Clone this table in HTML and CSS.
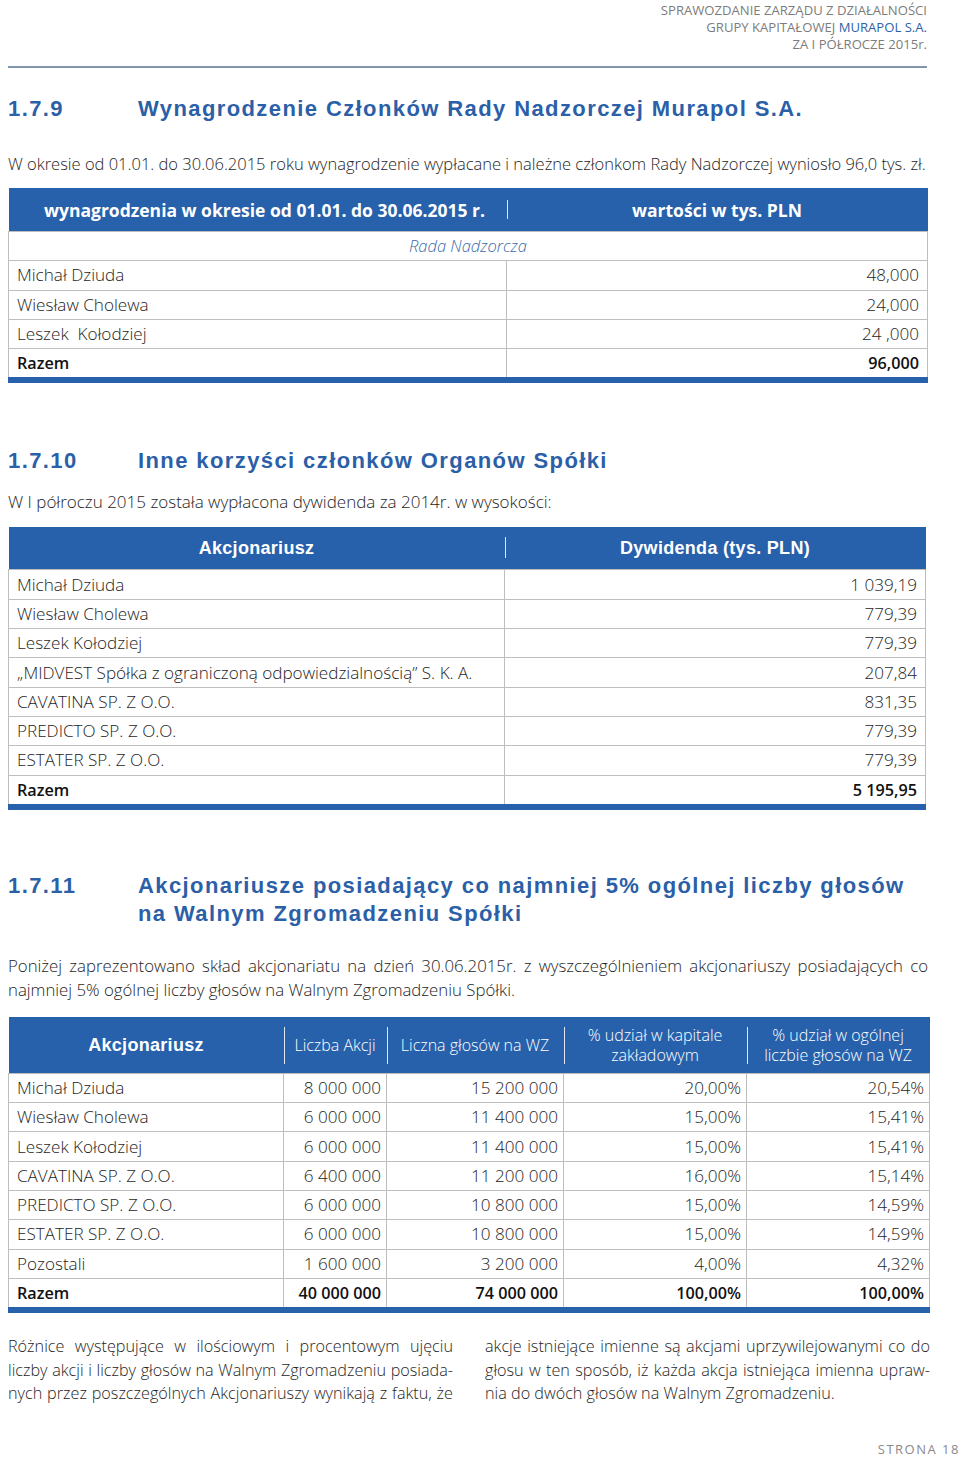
FILE: index.html
```html
<!DOCTYPE html>
<html lang="pl">
<head>
<meta charset="utf-8">
<title>Sprawozdanie</title>
<link rel="stylesheet" href="styles.css">
</head>
<body>
<div class="page">
  <header class="doc-head">
    <div>SPRAWOZDANIE ZARZĄDU Z DZIAŁALNOŚCI</div>
    <div>GRUPY KAPITAŁOWEJ <span class="brand">MURAPOL S.A.</span></div>
    <div>ZA I PÓŁROCZE 2015r.</div>
  </header>

  <h2 class="sec sec-1"><span class="num">1.7.9</span><span class="title">Wynagrodzenie Członków Rady Nadzorczej Murapol S.A.</span></h2>
  <p class="txt p1">W okresie od 01.01. do 30.06.2015 roku wynagrodzenie wypłacane i należne członkom Rady Nadzorczej wyniosło 96,0 tys. zł.</p>

  <table class="tbl t1">
    <thead>
      <tr class="hrow h1">
        <th class="c1 semi">wynagrodzenia w okresie od 01.01. do 30.06.2015 r.</th>
        <th class="c2 semi sep">wartości w tys. PLN</th>
      </tr>
    </thead>
    <tbody>
      <tr><td colspan="2" class="group">Rada Nadzorcza</td></tr>
      <tr><td>Michał Dziuda</td><td class="num">48,000</td></tr>
      <tr><td>Wiesław Cholewa</td><td class="num">24,000</td></tr>
      <tr><td>Leszek&nbsp; Kołodziej</td><td class="num">24 ,000</td></tr>
      <tr class="total"><td>Razem</td><td class="num">96,000</td></tr>
    </tbody>
  </table>

  <h2 class="sec sec-2"><span class="num">1.7.10</span><span class="title">Inne korzyści członków Organów Spółki</span></h2>
  <p class="txt p2">W I półroczu 2015 została wypłacona dywidenda za 2014r. w wysokości:</p>

  <table class="tbl t2">
    <thead>
      <tr class="hrow h2">
        <th class="c1 arial">Akcjonariusz</th>
        <th class="c2 arial sep">Dywidenda (tys. PLN)</th>
      </tr>
    </thead>
    <tbody>
      <tr><td>Michał Dziuda</td><td class="num">1 039,19</td></tr>
      <tr><td>Wiesław Cholewa</td><td class="num">779,39</td></tr>
      <tr><td>Leszek Kołodziej</td><td class="num">779,39</td></tr>
      <tr><td>„MIDVEST Spółka z ograniczoną odpowiedzialnością” S. K. A.</td><td class="num">207,84</td></tr>
      <tr><td>CAVATINA SP. Z O.O.</td><td class="num">831,35</td></tr>
      <tr><td>PREDICTO SP. Z O.O.</td><td class="num">779,39</td></tr>
      <tr><td>ESTATER SP. Z O.O.</td><td class="num">779,39</td></tr>
      <tr class="total"><td>Razem</td><td class="num">5 195,95</td></tr>
    </tbody>
  </table>

  <h2 class="sec sec-3"><span class="num">1.7.11</span><span class="title">Akcjonariusze posiadający co najmniej 5% ogólnej liczby głosów na Walnym Zgromadzeniu Spółki</span></h2>
  <p class="txt p3">Poniżej zaprezentowano skład akcjonariatu na dzień 30.06.2015r. z wyszczególnieniem akcjonariuszy posiadających co najmniej 5% ogólnej liczby głosów na Walnym Zgromadzeniu Spółki.</p>

  <table class="tbl t3">
    <thead>
      <tr class="hrow h3">
        <th class="k1 arial">Akcjonariusz</th>
        <th class="k2 light sep">Liczba Akcji</th>
        <th class="k3 light sep">Liczna głosów na WZ</th>
        <th class="k4 light sep">% udział w kapitale<br>zakładowym</th>
        <th class="k5 light sep">% udział w ogólnej<br>liczbie głosów na WZ</th>
      </tr>
    </thead>
    <tbody>
      <tr><td>Michał Dziuda</td><td class="num">8 000 000</td><td class="num">15 200 000</td><td class="num">20,00%</td><td class="num">20,54%</td></tr>
      <tr><td>Wiesław Cholewa</td><td class="num">6 000 000</td><td class="num">11 400 000</td><td class="num">15,00%</td><td class="num">15,41%</td></tr>
      <tr><td>Leszek Kołodziej</td><td class="num">6 000 000</td><td class="num">11 400 000</td><td class="num">15,00%</td><td class="num">15,41%</td></tr>
      <tr><td>CAVATINA SP. Z O.O.</td><td class="num">6 400 000</td><td class="num">11 200 000</td><td class="num">16,00%</td><td class="num">15,14%</td></tr>
      <tr><td>PREDICTO SP. Z O.O.</td><td class="num">6 000 000</td><td class="num">10 800 000</td><td class="num">15,00%</td><td class="num">14,59%</td></tr>
      <tr><td>ESTATER SP. Z O.O.</td><td class="num">6 000 000</td><td class="num">10 800 000</td><td class="num">15,00%</td><td class="num">14,59%</td></tr>
      <tr><td>Pozostali</td><td class="num">1 600 000</td><td class="num">3 200 000</td><td class="num">4,00%</td><td class="num">4,32%</td></tr>
      <tr class="total"><td>Razem</td><td class="num">40 000 000</td><td class="num">74 000 000</td><td class="num">100,00%</td><td class="num">100,00%</td></tr>
    </tbody>
  </table>

  <div class="notes">
    <p class="note">
      <span class="ln">Różnice występujące w ilościowym i procentowym ujęciu</span>
      <span class="ln">liczby akcji i liczby głosów na Walnym Zgromadzeniu posiada-</span>
      <span class="ln">nych przez poszczególnych Akcjonariuszy wynikają z faktu, że</span>
    </p>
    <p class="note">
      <span class="ln">akcje istniejące imienne są akcjami uprzywilejowanymi co do</span>
      <span class="ln">głosu w ten sposób, iż każda akcja istniejąca imienna upraw-</span>
      <span class="ln last">nia do dwóch głosów na Walnym Zgromadzeniu.</span>
    </p>
  </div>

  <footer class="foot">STRONA 18</footer>
</div>
</body>
</html>
```

FILE: styles.css
```css
html, body {
  margin: 0;
  padding: 0;
  background: #ffffff;
}

body {
  font-family: "Open Sans", "Liberation Sans", sans-serif;
  font-weight: 300;
  color: #1e1e1e;
}

.page {
  width: 922px;
  margin-left: 8px;
  display: flex;
  flex-direction: column;
}

.doc-head {
  align-self: flex-end;
  width: 919px;
  margin-right: 3px;
  padding-top: 2px;
  padding-bottom: 13px;
  border-bottom: 2px solid #8196ad;
  text-align: right;
  font-size: 13.1px;
  line-height: 17px;
  color: #7c7c7c;
  font-weight: 400;
}

.doc-head .brand {
  color: #2d63a8;
}

.sec {
  display: flex;
  margin: 0;
  font-family: "Liberation Sans", Arial, sans-serif;
  font-weight: 700;
  font-size: 22px;
  line-height: 28px;
  letter-spacing: 1.4px;
  color: #2b5fa7;
}

.sec .num {
  width: 130px;
  flex: none;
}

.sec .title {
  width: 780px;
}

.sec-1 { margin-top: 27px; }
.sec-2 { margin-top: 64px; }
.sec-3 { margin-top: 62px; }

.txt {
  margin: 0;
  font-size: 16.5px;
  line-height: 24px;
}

.p1 { margin-top: 29px; font-size: 16.5px; }
.p2 { margin-top: 15px; font-size: 17px; }
.p3 { margin-top: 26px; font-size: 16.8px; text-align: justify; width: 920px; }

.tbl {
  border-collapse: collapse;
  table-layout: fixed;
  font-size: 17.1px;
  border-bottom: 6px solid #2761ab;
}

.t1 { width: 920px; margin-top: 12px; }
.t2 { width: 918px; margin-top: 13px; }
.t3 { width: 922px; margin-top: 15px; }

.hrow th {
  background: #2761ab;
  color: #fff;
  position: relative;
  padding: 0;
  text-align: center;
  font-weight: 600;
  border: none;
}

.hrow .sep::before {
  content: "";
  position: absolute;
  left: 0;
  width: 1px;
  background: rgba(255, 255, 255, 0.85);
}

.h1 th { height: 43px; font-size: 17.5px; }
.h1 th.c1 { padding-left: 14px; }
.h1 .sep::before { top: 12px; bottom: 12px; }
.h2 th { height: 42px; font-size: 18px; }
.h2 .sep::before { top: 10px; bottom: 11px; }
.h3 th { height: 56px; font-size: 16px; line-height: 20px; }
.h3 .sep::before { top: 10px; bottom: 9px; }

.t1 .c1 { width: 484px; }
.t2 .c1 { width: 496px; }

.semi {
  font-weight: 700 !important;
}

.arial {
  font-family: "Liberation Sans", Arial, sans-serif;
  font-weight: 700 !important;
  font-size: 18px !important;
  letter-spacing: 0.3px;
}

.light {
  font-weight: 300 !important;
}

.k1 { width: 275px; }
.k2 { width: 103px; }
.k3 { width: 177px; }
.k4 { width: 183px; }

.tbl td {
  height: 28.3px;
  padding: 0 8px;
  border: 1px solid #bdbdbd;
  white-space: nowrap;
  line-height: 20px;
}

.t3 td { padding: 0 5px 0 8px; }

.tbl td.num { text-align: right; }

.tbl td.group {
  text-align: center;
  font-style: italic;
  color: #3b6aaa;
  font-size: 16.5px;
  padding: 0;
}

.tbl tr.total td {
  font-weight: 600;
  font-size: 16.2px;
  color: #111;
}

.notes {
  display: grid;
  grid-template-columns: 445px 445px;
  column-gap: 32px;
  margin-top: 22px;
}

.note {
  margin: 0;
  font-size: 16.2px;
  line-height: 23.5px;
}

.note .ln {
  display: block;
  text-align: justify;
  text-align-last: justify;
}

.note .ln.last {
  text-align-last: left;
}

.foot {
  align-self: flex-end;
  margin-top: 35px;
  margin-right: -30px;
  font-size: 13px;
  line-height: 16px;
  letter-spacing: 1.5px;
  color: #8a8a8a;
  font-weight: 400;
}
```
